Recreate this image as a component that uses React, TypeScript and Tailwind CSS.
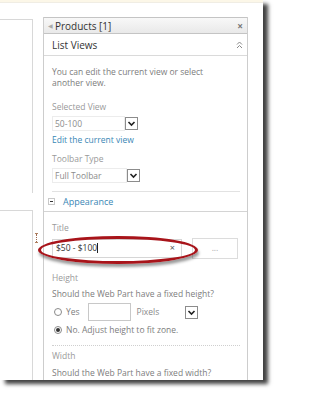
import React from 'react'

function Chevron() {
  return (
    <div className="w-[13px] h-[13px] border border-[#8c8c8c] bg-white flex items-center justify-center">
      <svg width="9" height="9" viewBox="0 0 9 9">
        <path d="M1.5 3 L4.5 6 L7.5 3" fill="none" stroke="#222" strokeWidth="1.6" />
      </svg>
    </div>
  )
}

function Select({ value, width }: { value: string; width: string }) {
  return (
    <div className="flex items-center h-[15px]">
      <div className={`${width} h-[15px] border border-[#ececec] flex items-center pl-[2px] text-[#8c8c8c]`}>
        {value}
      </div>
      <Chevron />
    </div>
  )
}

function Radio({ checked }: { checked?: boolean }) {
  return (
    <div className="w-[8px] h-[8px] rounded-full border border-[#8a8a8a] bg-white flex items-center justify-center">
      {checked && <div className="w-[4px] h-[4px] rounded-full bg-[#333]" />}
    </div>
  )
}

export default function App() {
  return (
    <div className="relative w-[279px] h-[393px] bg-white overflow-hidden text-[8.5px] leading-[12px] text-[#888] font-['Open_Sans',sans-serif]">
      <div className="w-[263px] h-[380px] bg-white flex flex-col shadow-[5px_4px_4px_rgba(0,0,0,0.75)]">
        {/* torn top edge */}
        <div className="h-[3px] bg-[#fcf7e8] border-b border-[#f0ede4]" />

        <div className="flex flex-1 min-h-0">
          {/* page content behind the tool pane */}
          <div className="w-[33px] pt-[16px] flex flex-col">
            <div className="h-[174px] border-t border-r border-[#d8d8d8]" />
            <div className="mt-[17px] flex-1 border-t border-r border-[#d8d8d8]" />
          </div>

          {/* Tool pane */}
          <div className="ml-[10px] mt-[14px] w-[205px] border-l border-r border-[#cdcdcd] flex flex-col">
            <div className="h-[17px] border-t border-b border-[#c4c4c4] bg-gradient-to-b from-[#f8f8f8] to-[#e9e9e9] flex items-center pl-[4px] pr-[4px]">
              <span className="text-[6px] text-[#aaa] mr-[2px]">◀</span>
              <span className="text-[10px] text-[#333]">Products [1]</span>
              <span className="ml-auto text-[10px] font-bold text-[#777] leading-none">×</span>
            </div>

            <div className="h-[22px] border-b border-[#dadada] flex items-center pl-[8px] pr-[4px]">
              <span className="text-[10px] text-[#333]">List Views</span>
              <svg className="ml-auto" width="7" height="8" viewBox="0 0 7 8">
                <path d="M1 3.5 L3.5 1 L6 3.5 M1 7 L3.5 4.5 L6 7" fill="none" stroke="#888" strokeWidth="1" />
              </svg>
            </div>

            <div className="pl-[8px] pr-[7px] pt-[10px] flex flex-col">
              <p className="leading-[11px] text-[#7d7d7d]">
                You can edit the current view or select
                <br />
                another view.
              </p>
              <div className="mt-[13px] h-[12px] text-[#9a9a9a]">Selected View</div>
              <div className="mt-[3px]">
                <Select value="50-100" width="w-[73px]" />
              </div>
              <div className="mt-[3px] h-[12px] text-[#3a87b5]">Edit the current view</div>
              <div className="mt-[7px] h-[12px] text-[#9a9a9a]">Toolbar Type</div>
              <div className="mt-[3px]">
                <Select value="Full Toolbar" width="w-[75px]" />
              </div>
              <div className="mt-[8px] h-px bg-[#e2e2e2]" />
            </div>

            <div className="h-[20px] border-b border-[#d4d4d4] flex items-center pl-[4px]">
              <div className="w-[7px] h-[7px] border border-[#c8c8c8] flex items-center justify-center">
                <div className="w-[3px] h-px bg-[#333]" />
              </div>
              <span className="ml-[8px] text-[9px] text-[#3a87b5]">Appearance</span>
            </div>

            <div className="pl-[8px] pr-[7px] flex flex-col">
              <div className="mt-[10px] h-[12px] text-[#9a9a9a]">Title</div>
              <div className="mt-[4px] flex items-center h-[20px]">
                <div className="w-[130px] h-[19px] border border-[#d6d6d6] flex items-center pl-[3px] pr-[6px] text-[#333]">
                  <span>$50 - $100</span>
                  <span className="w-px h-[10px] bg-[#222]" />
                  <span className="ml-auto text-[9px] text-[#555]">×</span>
                </div>
                <div className="ml-[10px] w-[46px] h-[21px] border border-[#dcdcdc] flex items-center justify-center text-[#aaa]">
                  ...
                </div>
              </div>
              <div className="mt-[14px] h-[12px] text-[#9a9a9a]">Height</div>
              <div className="mt-[4px] h-[12px] text-[#7d7d7d]">Should the Web Part have a fixed height?</div>
              <div className="mt-[3px] h-[18px] flex items-center pl-[2px]">
                <Radio />
                <span className="ml-[4px] text-[#7d7d7d]">Yes</span>
                <div className="ml-[8px] w-[43px] h-[18px] border border-[#c8c8c8]" />
                <span className="ml-[6px] text-[#8a8a8a]">Pixels</span>
                <div className="ml-[26px]">
                  <Chevron />
                </div>
              </div>
              <div className="mt-[2px] h-[14px] flex items-center pl-[2px]">
                <Radio checked />
                <span className="ml-[4px] text-[#7d7d7d]">No. Adjust height to fit zone.</span>
              </div>
              <div className="mt-[8px] border-t border-dotted border-[#cfcfcf]" />
              <div className="mt-[4px] h-[12px] text-[#9a9a9a]">Width</div>
              <div className="mt-[5px] h-[12px] text-[#7d7d7d]">Should the Web Part have a fixed width?</div>
            </div>
          </div>
        </div>
      </div>

      {/* red highlight ellipse around the title box */}
      <div className="absolute left-[38px] top-[236px] w-[160px] h-[28px] rounded-[50%] border-[3px] border-[#a8141a] shadow-[1px_3px_3px_rgba(0,0,0,0.4)]" />

      {/* small resize marker */}
      <div className="absolute left-[35px] top-[233px] w-[3px] h-[10px] flex flex-col items-center">
        <div className="w-[3px] h-px bg-[#b08060]" />
        <div className="flex-1 border-l border-dotted border-[#a06a50]" />
        <div className="w-[3px] h-px bg-[#b08060]" />
      </div>
    </div>
  )
}
